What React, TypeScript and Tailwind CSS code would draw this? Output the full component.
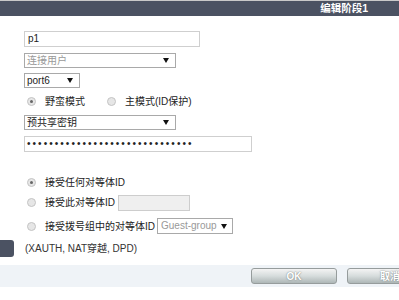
import React from "react";

const font = { fontFamily: '"Liberation Sans", "Noto Sans CJK SC", sans-serif' };

function Arrow() {
  return (
    <span className="w-0 h-0 border-l-[3px] border-r-[3px] border-t-[5px] border-l-transparent border-r-transparent border-t-[#111]" />
  );
}

function Select({ text, w, gray }: { text: string; w: string; gray?: boolean }) {
  return (
    <div className={`${w} h-[15px] border border-[#a9a9a9] bg-white flex items-center justify-between pl-[2px] pr-[6px]`}>
      <span className={`text-[10px] leading-none ${gray ? "text-[#999]" : "text-[#222]"}`}>{text}</span>
      <Arrow />
    </div>
  );
}

function Radio({ checked }: { checked?: boolean }) {
  return (
    <span className="w-[9px] h-[9px] rounded-full border border-[#c4c4c4] bg-[#e6e6e6] flex items-center justify-center shrink-0">
      {checked && <span className="w-[3px] h-[3px] rounded-full bg-[#666]" />}
    </span>
  );
}

function Btn({ label }: { label: string }) {
  return (
    <div className="w-[86px] h-[16px] shrink-0 rounded-[3px] border border-[#969c9c] bg-gradient-to-b from-[#f4f4f4] via-[#d6dcdc] to-[#aeb7b7] flex items-center justify-center">
      <span className="text-[10px] font-bold text-white [text-shadow:0_0_1.5px_#5e6666]">{label}</span>
    </div>
  );
}

export default function App() {
  return (
    <div className="w-[399px] h-[300px] overflow-hidden bg-white text-[#222]" style={font}>
      <div className="h-[16px] border-t border-[#c9c9c9] bg-[#4b5262] flex items-center justify-end pr-[31px]">
        <span className="text-[10.5px] font-bold text-white leading-none">编辑阶段1</span>
      </div>
      <div className="pl-[24px] pt-[15px] flex flex-col">
        <div className="w-[176px] h-[16px] border border-[#cfcfcf] flex items-center pl-[3px]">
          <span className="text-[10px] leading-none text-[#222]">p1</span>
        </div>
        <div className="mt-[6px]">
          <Select text="连接用户" w="w-[152px]" gray />
        </div>
        <div className="mt-[5px]">
          <Select text="port6" w="w-[56px]" />
        </div>
        <div className="mt-[6px] h-[14px] flex items-center pl-[3px] text-[10px]">
          <Radio checked />
          <span className="ml-[9px]">野蛮模式</span>
          <span className="ml-[22px]"><Radio /></span>
          <span className="ml-[9px]">主模式(ID保护)</span>
        </div>
        <div className="mt-[7px]">
          <Select text="预共享密钥" w="w-[152px]" />
        </div>
        <div className="mt-[6px] w-[228px] h-[16px] border border-[#cfcfcf] flex items-center pl-[2px]">
          <span className="text-[10px] leading-none tracking-[2.05px] text-[#222]">{"•".repeat(30)}</span>
        </div>
        <div className="mt-[23px] h-[14px] flex items-center pl-[3px] text-[10px]">
          <Radio checked />
          <span className="ml-[9px]">接受任何对等体ID</span>
        </div>
        <div className="mt-[5px] h-[17px] flex items-center pl-[3px] text-[10px]">
          <Radio />
          <span className="ml-[9px]">接受此对等体ID</span>
          <span className="ml-[3px] w-[72px] h-[16px] border border-[#cdcdcd] bg-[#efefef]" />
        </div>
        <div className="mt-[7px] h-[16px] flex items-center pl-[3px] text-[10px]">
          <Radio />
          <span className="ml-[9px]">接受拨号组中的对等体ID</span>
          <div className="ml-[2px] w-[76px] h-[16px] border border-[#a9a9a9] flex items-center justify-between pl-[3px] pr-[5px]">
            <span className="text-[10px] leading-none text-[#999]">Guest-group</span>
            <Arrow />
          </div>
        </div>
      </div>
      <div className="mt-[6px] h-[17px] flex items-center">
        <span className="w-[14px] h-[17px] rounded-r-[3px] bg-[#4b5262]" />
        <span className="ml-[11px] text-[10px] text-[#333]">(XAUTH, NAT穿越, DPD)</span>
      </div>
      <div className="mt-[8px] h-[22px] bg-[#eff3f7] flex items-center pl-[251px] gap-[10px]">
        <Btn label="OK" />
        <Btn label="取消" />
      </div>
    </div>
  );
}
